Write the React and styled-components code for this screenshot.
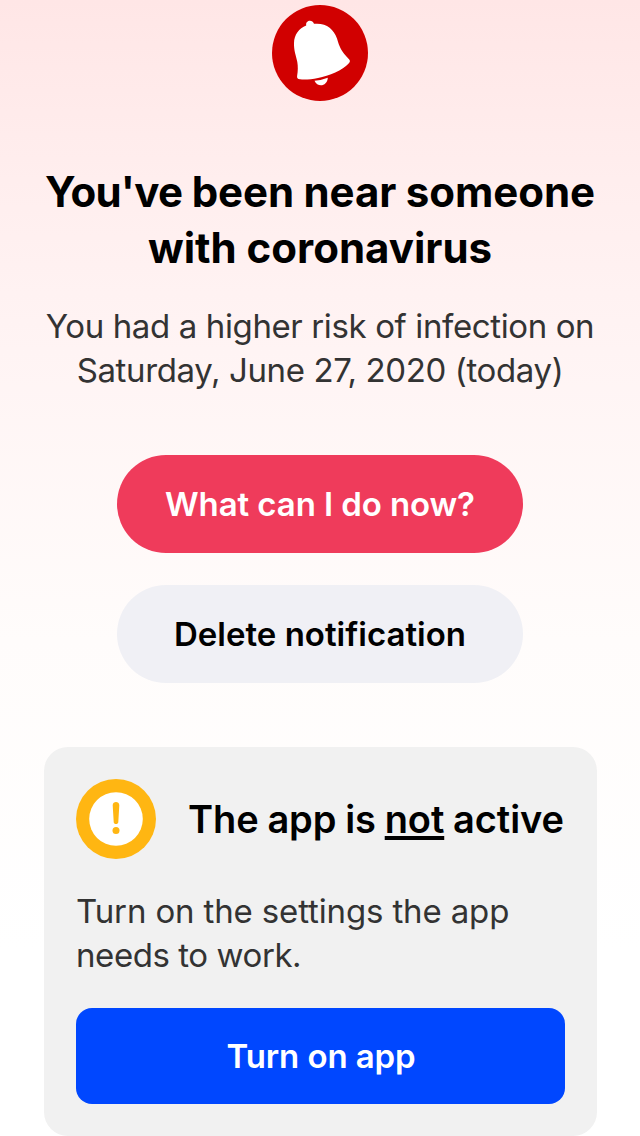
import React from 'react';
import styled, { createGlobalStyle } from 'styled-components';

const Global = createGlobalStyle`
  * { box-sizing: border-box; }
  body { margin: 0; font-family: Inter, "Liberation Sans", sans-serif; }
`;
const Screen = styled.main`
  width: 640px; height: 1136px; overflow: hidden;
  padding-top: 5px;
  display: flex; flex-direction: column; align-items: center;
  background: linear-gradient(#ffe6e6 0, #ffeeee 180px, #fff4f4 350px, #fffcfb 640px, #fff 950px);
`;
const Line = styled.span`
  display: block; white-space: nowrap;
  letter-spacing: ${p => p.$track || 0}px;
  word-spacing: ${p => p.$words || 0}px;
`;
const Tight = styled.span`
  letter-spacing: -0.75px;
`;
const Title = styled.h1`
  margin: 63px 0 0; font-size: 42px; line-height: 56px; font-weight: 700;
  color: #000; text-align: center;
`;
const Lead = styled.p`
  margin: 28px 0 0; font-size: 33px; line-height: 44px; color: #333; text-align: center;
`;
const Pill = styled.button`
  width: 406px; height: 98px; margin-top: ${p => p.$gap}px; padding: 0; border: 0; border-radius: 49px;
  font: 600 33px/44px Inter, sans-serif; letter-spacing: ${p => p.$track}px;
  background: ${p => (p.$primary ? '#ef3b5b' : '#f0f0f5')};
  color: ${p => (p.$primary ? '#fff' : '#000')};
`;
const Card = styled.section`
  width: 553px; height: 389px; margin: 64px 0 0 1px; padding: 32px;
  border-radius: 24px; background: #f1f1f1;
`;
const CardHead = styled.div`
  display: flex; align-items: center; gap: 32px; height: 80px;
  svg { flex: none; }
`;
const CardTitle = styled.h2`
  margin: 0; font-size: 38px; font-weight: 600; letter-spacing: -0.1px; word-spacing: -0.6px;
  white-space: nowrap; color: #000;
  u { text-decoration-thickness: 4px; text-underline-offset: 3px; text-decoration-skip-ink: none; }
`;
const CardText = styled.p`
  margin: 30px 0 0; font-size: 33px; line-height: 44px; color: #333;
`;
const Action = styled.button`
  width: 489px; height: 96px; margin-top: 31px; padding: 0 0 0 1px; border: 0; border-radius: 16px;
  background: #0047ff; color: #fff; font: 600 33px/44px Inter, sans-serif; letter-spacing: -0.1px;
`;
const Bell = () => (
  <svg width="96" height="96" viewBox="0 0 96 96">
    <circle cx="48" cy="48" r="48" fill="#d10000" />
    <path fill="#fff" d="M34.2 20.4C33.3 15.2 40.5 14.2 42 18.8C54 17.6 61.5 23.5 65 33.5C67.5 42 69 46 77 54.2C78.4 55.7 78.2 57 76.4 58.8C71 65 57 71 46 73C39 74.3 33 75 28 74.3C25.5 74 24.8 73 25.1 71C26 66 26 61 25.3 57C24 50 21.8 46 22 38C22.2 29.5 27 23.3 34.2 20.4Z" />
    <path fill="#fff" d="M42.5 75.8Q49.5 75.3 55.8 72.8C55.4 81.5 45.5 82.8 42.5 75.8Z" />
  </svg>
);
const Warning = () => (
  <svg width="80" height="80" viewBox="0 0 80 80">
    <circle cx="40" cy="40" r="40" fill="#ffb612" />
    <circle cx="40" cy="40" r="26.8" fill="#fff" />
    <path d="M36.7 26.3C36.7 22 43.3 22 43.3 26.3L42.3 43C42.2 45.7 37.8 45.7 37.7 43Z" fill="#ffb612" />
    <circle cx="40" cy="51.5" r="3.5" fill="#ffb612" />
  </svg>
);

export default function App() {
  return (
    <Screen>
      <Global />
      <Bell />
      <Title><Line $track={-0.05} $words={-0.5}><Tight>You've</Tight> been near someone</Line><Line>with coronavirus</Line></Title>
      <Lead><Line $track={-0.38}>You had a higher risk of infection on</Line><Line $track={-0.37}>Saturday, June 27, 2020 (today)</Line></Lead>
      <Pill $primary $gap={63} $track={-0.1}>What can I do now?</Pill>
      <Pill $gap={32} $track={0}>Delete notification</Pill>
      <Card>
        <CardHead><Warning /><CardTitle>The app is <u>not</u> active</CardTitle></CardHead>
        <CardText><Line $track={-0.14}>Turn on the settings the app</Line><Line $track={-0.43}>needs to work.</Line></CardText>
        <Action>Turn on app</Action>
      </Card>
    </Screen>
  );
}
